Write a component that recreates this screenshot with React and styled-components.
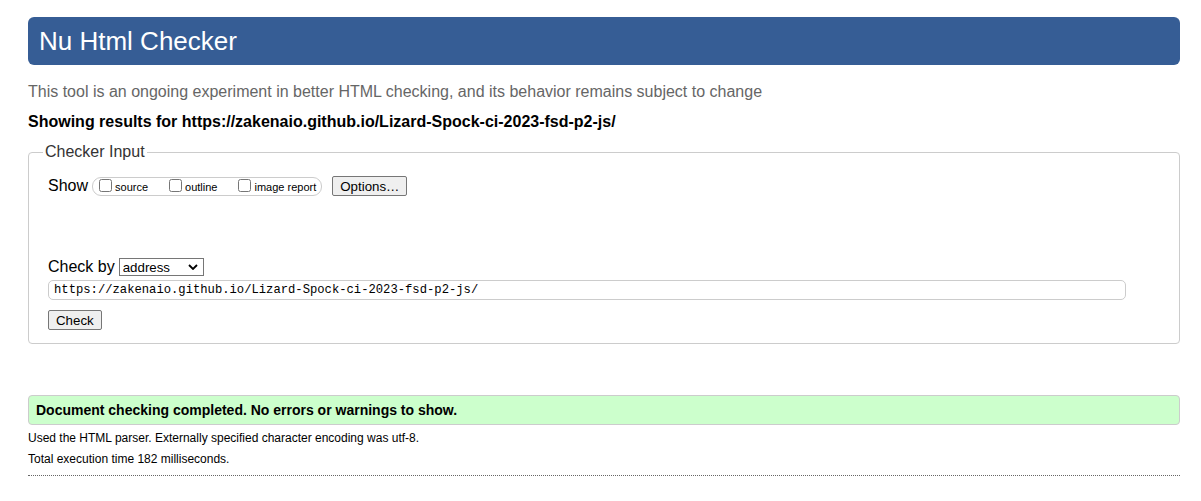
import React, { useState } from "react";
import styled, { createGlobalStyle } from "styled-components";

const GlobalStyle = createGlobalStyle`
  html, body {
    margin: 0;
    padding: 0;
    background: #ffffff;
  }
  body {
    font-family: "Liberation Sans", Arial, sans-serif;
    color: #000;
  }
`;

const App = () => {
  const [url, setUrl] = useState(
    "https://zakenaio.github.io/Lizard-Spock-ci-2023-fsd-p2-js/"
  );

  return (
    <Page>
      <GlobalStyle />
      <Header>
        <Title>Nu Html Checker</Title>
      </Header>
      <Intro>
        This tool is an ongoing experiment in better HTML checking, and its
        behavior remains subject to change
      </Intro>
      <ResultsFor>
        Showing results for https://zakenaio.github.io/Lizard-Spock-ci-2023-fsd-p2-js/
      </ResultsFor>

      <Fieldset>
        <Legend>Checker Input</Legend>
        <ShowRow>
          <Label>Show</Label>
          <Pill>
            <Option>
              <Box type="checkbox" />
              source
            </Option>
            <Option>
              <Box type="checkbox" />
              outline
            </Option>
            <Option>
              <Box type="checkbox" />
              image report
            </Option>
          </Pill>
          <Button>Options…</Button>
        </ShowRow>

        <CheckByRow>
          <Label>Check by</Label>
          <SelectWrap>
            <Select defaultValue="address">
              <option value="address">address</option>
              <option value="file">file upload</option>
              <option value="text">text input</option>
            </Select>
            <Chevron viewBox="0 0 10 6">
              <path d="M1 1l4 4 4-4" fill="none" stroke="#000" strokeWidth="1.8" />
            </Chevron>
          </SelectWrap>
        </CheckByRow>

        <UrlInput value={url} onChange={(e) => setUrl(e.target.value)} />
        <Button>Check</Button>
      </Fieldset>

      <Success>Document checking completed. No errors or warnings to show.</Success>
      <Detail>Used the HTML parser. Externally specified character encoding was utf-8.</Detail>
      <Detail>Total execution time 182 milliseconds.</Detail>
      <Rule />
    </Page>
  );
};

export default App;

// ----------------------------
// Styled Components
// ----------------------------
const Page = styled.div`
  padding: 17px 21px 0 28px;
`;

const Header = styled.div`
  height: 48px;
  background: #365d95;
  border-radius: 6px;
  display: flex;
  align-items: center;
  padding-left: 11px;
`;

const Title = styled.h1`
  margin: 0;
  font-size: 26px;
  font-weight: normal;
  color: #ffffff;
`;

const Intro = styled.p`
  margin: 18px 0 0;
  font-size: 16px;
  line-height: 18px;
  color: #666666;
`;

const ResultsFor = styled.p`
  margin: 12px 0 0;
  font-size: 16px;
  line-height: 18px;
  font-weight: bold;
`;

const Fieldset = styled.fieldset`
  margin: 12px 0 0;
  padding: 4px 19px 13px;
  border: 1px solid #cccccc;
  border-radius: 4px;
`;

const Legend = styled.legend`
  padding: 0 2px;
  margin-left: -5px;
  font-size: 16px;
  line-height: 18px;
  color: #333333;
`;

const ShowRow = styled.div`
  display: flex;
  align-items: center;
  height: 20px;
  margin-top: 11px;
`;

const CheckByRow = styled.div`
  display: flex;
  align-items: center;
  height: 18px;
  margin-top: 62px;
`;

const Label = styled.span`
  font-size: 16px;
  margin-right: 4px;
`;

const Pill = styled.span`
  display: inline-flex;
  align-items: center;
  gap: 21px;
  height: 17px;
  padding: 0 5px 0 6px;
  border: 1px solid #cccccc;
  border-radius: 9px;
  margin-right: 10px;
`;

const Option = styled.label`
  display: inline-flex;
  align-items: center;
  font-size: 11px;
  padding-top: 2px;
`;

const Box = styled.input`
  width: 13px;
  height: 13px;
  margin: 0 3px 0 0;
  position: relative;
  top: -2px;
`;

const Button = styled.button`
  font-family: "Liberation Sans", Arial, sans-serif;
  font-size: 13.3px;
  height: 20px;
  padding: 0 7px;
  background: #efefef;
  border: 1px solid #767676;
  border-radius: 2px;
  color: #000;
`;

const SelectWrap = styled.span`
  position: relative;
  display: inline-block;
`;

const Select = styled.select`
  appearance: none;
  width: 85px;
  height: 18px;
  padding: 0 0 0 3px;
  font-family: "Liberation Sans", Arial, sans-serif;
  font-size: 13.3px;
  border: 1px solid #767676;
  border-radius: 0;
  background: #ffffff;
  color: #000;
`;

const Chevron = styled.svg`
  position: absolute;
  right: 6px;
  top: 6px;
  width: 10px;
  height: 6px;
  pointer-events: none;
`;

const UrlInput = styled.input`
  display: block;
  box-sizing: border-box;
  width: 1078px;
  height: 20px;
  margin: 4px 0 10px;
  padding: 0 5px;
  font-family: "Liberation Mono", "Courier New", monospace;
  font-size: 12.2px;
  border: 1px solid #cccccc;
  border-radius: 5px;
  color: #000;
  outline: none;
`;

const Success = styled.p`
  margin: 51px 0 0;
  box-sizing: border-box;
  height: 30px;
  display: flex;
  align-items: center;
  padding-left: 7px;
  background: #ccffcc;
  border: 1px solid #cccccc;
  border-radius: 4px;
  font-size: 14px;
  font-weight: bold;
`;

const Detail = styled.p`
  margin: 6px 0 0;
  font-size: 12px;
  line-height: 15px;
  color: #000;
`;

const Rule = styled.hr`
  margin: 8px 0 0;
  border: 0;
  border-top: 1px dotted #666666;
`;
